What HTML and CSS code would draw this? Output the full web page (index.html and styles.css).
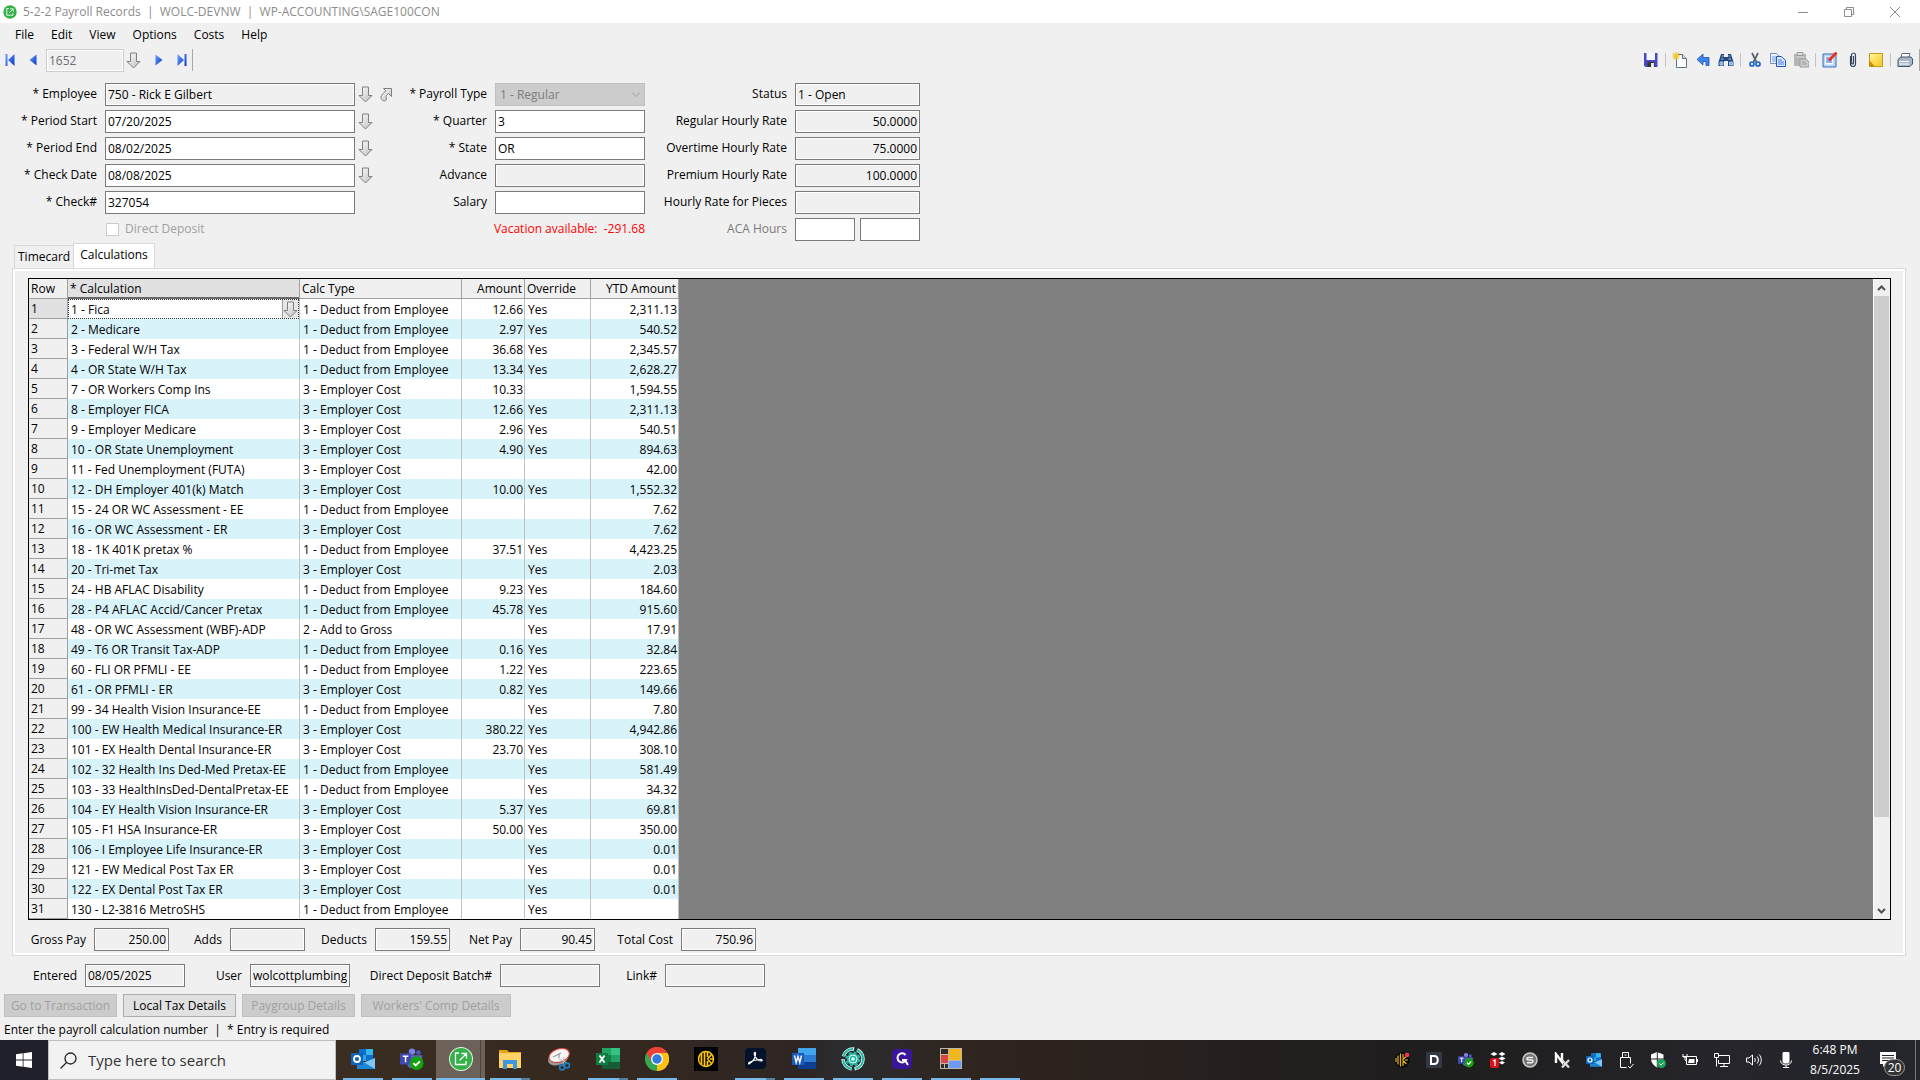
FILE: index.html
```html
<!DOCTYPE html>
<html lang="en">
<head>
<meta charset="utf-8">
<title>5-2-2 Payroll Records</title>
<link rel="stylesheet" href="styles.css">
</head>
<body>
<svg class="defs" aria-hidden="true">
  <defs>
    <linearGradient id="silver" x1="0" y1="0" x2="1" y2="1"><stop offset="0" stop-color="#fff"/><stop offset="1" stop-color="#bdbdbd"/></linearGradient>
    <linearGradient id="blue" x1="0" y1="0" x2="1" y2="1"><stop offset="0" stop-color="#6aa2ff"/><stop offset="1" stop-color="#0a35c0"/></linearGradient>
    <linearGradient id="gold" x1="0" y1="0" x2="1" y2="1"><stop offset="0" stop-color="#fff9a0"/><stop offset="1" stop-color="#f5c518"/></linearGradient>
    <symbol id="down" viewBox="0 0 15 17"><path d="M4.500 1h6v8.500h3.500L7.500 16 1 9.500h3.500z" fill="url(#silver)" stroke="#808080"/></symbol>
    <symbol id="jump" viewBox="0 0 14 15"><path d="M4.500 1.500h8v8l-3-3c-2 1.500-3 3-2.500 4.500l1 1-2.500 2c-2.500-.5-4-2.500-3.500-4 .5-2 2.500-4.500 5-6z" fill="url(#silver)" stroke="#808080"/></symbol>
    <symbol id="prev" viewBox="0 0 8 12"><path d="M7.500 .5v11L.5 6z" fill="url(#blue)"/></symbol>
    <symbol id="next" viewBox="0 0 8 12"><path d="M.5 .5v11l7-5.500z" fill="url(#blue)"/></symbol>
    <symbol id="first" viewBox="0 0 10 12"><path d="M.5 0h2v12h-2zM9.500 0v12L3 6z" fill="url(#blue)"/></symbol>
    <symbol id="last" viewBox="0 0 10 12"><path d="M7.500 0h2v12h-2zM.5 0v12L7 6z" fill="url(#blue)"/></symbol>
    <symbol id="sage" viewBox="0 0 24 24"><circle cx="12" cy="12" r="11.500" fill="#35b048"/><path d="M10 6H6.500v11.500H17V14M10.500 13.500 17 7M12.500 6.500h5v5" fill="none" stroke="#fff" stroke-width="1.500"/></symbol>
    <symbol id="outlook" viewBox="0 0 24 24"><path d="M8 2h14v12H8z" fill="#28a8ea"/><path d="M8 2h7v6H8zM15 8h7v6h-7z" fill="#0a6fc9"/><path d="M15 2h7v6h-7z" fill="#35b8f1"/><path d="M6 11l9 5 9-5v11H6z" fill="#1a86d8"/><path d="M24 11v11L13 15.500z" fill="#7cc7f4"/><path d="M0 6h12v12H0z" fill="#0f64b8"/><circle cx="6" cy="12" r="3" fill="none" stroke="#fff" stroke-width="1.800"/></symbol>
    <symbol id="teams" viewBox="0 0 26 24"><circle cx="13" cy="4" r="3.500" fill="#7b83eb"/><circle cx="20" cy="5" r="2.500" fill="#5059c9"/><path d="M8 8h16v8c0 3-3 4-5 4-2 3-9 3-11-1z" fill="#5b64cf"/><path d="M0 6h12v12H0z" fill="#4048b0"/><path d="M3 9h6M6 9v6.500" stroke="#fff" stroke-width="1.600"/><circle cx="18" cy="16.500" r="7.500" fill="#13a10e"/><path d="M14.500 16.500l2.500 2.500 4.500-4.500" fill="none" stroke="#fff" stroke-width="2"/></symbol>
    <symbol id="keeper" viewBox="0 0 24 24"><circle cx="12" cy="12" r="7.500" fill="none" stroke="#ffc700" stroke-width="1.500"/><path d="M7.500 7v10M10.500 5v14M13.500 5v5M13.500 14v5M13.500 12l4-4.500M13.500 12l4 4.500M16 12h3" stroke="#ffc700" stroke-width="1.700" fill="none"/></symbol>
  </defs>
</svg>

<header class="titlebar">
  <svg class="app-icon" viewBox="0 0 24 24"><use href="#sage"/></svg>
  <h1>5-2-2 Payroll Records&nbsp; |&nbsp; WOLC-DEVNW&nbsp; |&nbsp; WP-ACCOUNTING\SAGE100CON</h1>
  <div class="window-buttons">
    <button aria-label="Minimize"><svg viewBox="0 0 12 12"><path d="M1 6.500h10"/></svg></button>
    <button aria-label="Restore"><svg viewBox="0 0 12 12"><path d="M1.500 3.500h7v7h-7zM3.500 3.500v-2h7v7h-2"/></svg></button>
    <button aria-label="Close"><svg viewBox="0 0 12 12"><path d="M1 1l10 10M11 1L1 11"/></svg></button>
  </div>
</header>

<nav class="menubar">
  <button>File</button><button>Edit</button><button>View</button><button>Options</button><button>Costs</button><button>Help</button>
</nav>

<div class="toolbar">
  <div class="record-nav">
    <button aria-label="First record"><svg width="10" height="12"><use href="#first"/></svg></button>
    <button aria-label="Previous record"><svg width="8" height="12"><use href="#prev"/></svg></button>
    <input class="field disabled" aria-label="Record number" value="1652" disabled>
    <button aria-label="Look up record"><svg width="15" height="17"><use href="#down"/></svg></button>
    <button aria-label="Next record"><svg width="8" height="12"><use href="#next"/></svg></button>
    <button aria-label="Last record"><svg width="10" height="12"><use href="#last"/></svg></button>
    <span class="sep tall"></span>
  </div>
  <div class="tools">
    <button aria-label="Save"><svg viewBox="0 0 16 16"><path d="M1 1h13.500v14H2.500L1 13.500z" fill="#4a4ac0"/><path d="M3.500 1h8.500v7H3.500z" fill="#f4f7ff"/><path d="M4.500 10h7v5h-7z" fill="#333"/><path d="M8 11h3v4H8z" fill="#e8e8e8"/></svg></button>
    <span class="sep"></span>
    <button aria-label="New"><svg viewBox="0 0 16 16"><path d="M4.500 2.500h6l4 4v9h-10z" fill="#fff" stroke="#5b7383"/><path d="M10.500 2.500v4h4" fill="#cfdbe6" stroke="#5b7383"/><path d="M4 0v8M0 4h8M1 1l6 6M7 1L1 7" stroke="#f3c623" stroke-width="1.200"/></svg></button>
    <button aria-label="Undo"><svg viewBox="0 0 16 16"><path d="M2 7.500 8 2v3.500h6v8h-3V9.500H8V13z" fill="#3d86ee" stroke="#1e4fb0" stroke-width=".8"/></svg></button>
    <button aria-label="Find"><svg viewBox="0 0 16 16"><path d="M3 2h3v3h4V2h3l2.500 8v4H10V9H6v5H.5v-4z" fill="#24477e"/><path d="M2 10h3v3H2zM11.500 10h3v3h-3zM3.500 4h2M10.500 4h2M3 7h2.500M10.500 7H13" stroke="#a9c9ee" fill="#7ba8de"/></svg></button>
    <span class="sep"></span>
    <button aria-label="Cut"><svg viewBox="0 0 16 16"><path d="M5 1l4.500 9M11 1l-4.500 9" stroke="#5a6470" stroke-width="1.700"/><circle cx="5" cy="12" r="2" fill="none" stroke="#1d62d1" stroke-width="1.700"/><circle cx="11" cy="12" r="2" fill="none" stroke="#1d62d1" stroke-width="1.700"/></svg></button>
    <button aria-label="Copy"><svg viewBox="0 0 16 16"><path d="M.5 1.500h6l3 3v7h-9z" fill="#eaf2ff" stroke="#6f8fc4"/><path d="M2 5h4M2 7h5M2 9h5" stroke="#6f9ae0"/><path d="M6.500 4.500h5l4 4v6h-9z" fill="#dce9ff" stroke="#2451b8"/><path d="M8 8h4M8 10h6M8 12h6" stroke="#4a7ad8"/></svg></button>
    <button aria-label="Paste" disabled><svg viewBox="0 0 16 16"><path d="M1 2h12v12H1z" fill="#b5b5b5"/><path d="M4 .5h6v3H4z" fill="#ddd" stroke="#999"/><path d="M3 5h8" stroke="#ddd"/><path d="M7 7h6l3 3v5H7z" fill="#cfcfcf" stroke="#9a9a9a"/><path d="M9 10h4M9 12h5" stroke="#9a9a9a"/></svg></button>
    <span class="sep"></span>
    <button aria-label="Notes"><svg viewBox="0 0 16 16"><path d="M1 2h13v13H1z" fill="#b9d4fb" stroke="#3c6cb8"/><path d="M3 4.500h8v8H3z" fill="#fff"/><path d="M4 6h4M4 8h6M4 10h6" stroke="#2a62d8"/><path d="M7 8.500 14.500 .500" stroke="#e8331a" stroke-width="2.800"/></svg></button>
    <button aria-label="Attachments"><svg viewBox="0 0 16 16"><path d="M5.500 4v8a2.500 2.500 0 0 0 5 0V3a2 2 0 0 0-4 0v8a1 1 0 0 0 2 0V4" fill="none" stroke="#33475b" stroke-width="1.200"/></svg></button>
    <button aria-label="Sticky note"><svg viewBox="0 0 16 16"><path d="M1.500 1.500h13v13h-13z" fill="url(#gold)" stroke="#c39a1c"/><path d="M1 8l6 6.500H1z" fill="#c88a00"/><path d="M2 8.500h4.500L7 14z" fill="#ffd94a"/></svg></button>
    <span class="sep"></span>
    <button aria-label="Print"><svg viewBox="0 0 16 16"><path d="M5 1.500h8L11 7H3.500z" fill="#fff" stroke="#5a6d80"/><path d="M1 7.500 4 5h10l1.500 2v5L13 14.500H1z" fill="#a9b8c8" stroke="#43566b"/><path d="M2 9.500h10M2 12h10" stroke="#fff"/></svg></button>
    <span class="sep tall"></span>
  </div>
</div>

<main>
  <form class="record-form">
    <div class="form-col col-a">
      <label for="employee">* Employee</label>
      <input class="field" id="employee" value="750 - Rick E Gilbert" readonly>
      <span class="lookups"><button type="button" aria-label="Look up employee"><svg width="15" height="17"><use href="#down"/></svg></button><button type="button" aria-label="Open employee"><svg width="14" height="15"><use href="#jump"/></svg></button></span>
      <label for="pstart">* Period Start</label>
      <input class="field" id="pstart" value="07/20/2025">
      <span class="lookups"><button type="button" aria-label="Pick period start"><svg width="15" height="17"><use href="#down"/></svg></button></span>
      <label for="pend">* Period End</label>
      <input class="field" id="pend" value="08/02/2025">
      <span class="lookups"><button type="button" aria-label="Pick period end"><svg width="15" height="17"><use href="#down"/></svg></button></span>
      <label for="cdate">* Check Date</label>
      <input class="field" id="cdate" value="08/08/2025">
      <span class="lookups"><button type="button" aria-label="Pick check date"><svg width="15" height="17"><use href="#down"/></svg></button></span>
      <label for="check">* Check#</label>
      <input class="field" id="check" value="327054">
      <span class="check-row"><input type="checkbox" id="dd" disabled><label for="dd">Direct Deposit</label></span>
    </div>
    <div class="form-col col-b">
      <label for="ptype">* Payroll Type</label>
      <span class="select-wrap"><select id="ptype" disabled><option>1 - Regular</option></select><svg viewBox="0 0 10 6"><path d="M1 .5l4 4 4-4" fill="none" stroke="#9a9a9a"/></svg></span>
      <label for="quarter">* Quarter</label>
      <input class="field" id="quarter" value="3">
      <label for="state">* State</label>
      <input class="field" id="state" value="OR">
      <label for="advance">Advance</label>
      <input class="field" id="advance" readonly>
      <label for="salary">Salary</label>
      <input class="field" id="salary">
      <p class="vacation">Vacation available:&nbsp; -291.68</p>
    </div>
    <div class="form-col col-c">
      <label for="status">Status</label>
      <input class="field" id="status" value="1 - Open" readonly>
      <label for="reg">Regular Hourly Rate</label>
      <input class="field num" id="reg" value="50.0000" readonly>
      <label for="ot">Overtime Hourly Rate</label>
      <input class="field num" id="ot" value="75.0000" readonly>
      <label for="prem">Premium Hourly Rate</label>
      <input class="field num" id="prem" value="100.0000" readonly>
      <label for="pieces">Hourly Rate for Pieces</label>
      <input class="field num" id="pieces" readonly>
      <label for="aca" class="dim">ACA Hours</label>
      <span class="pair"><input class="field" id="aca"><input class="field" aria-label="ACA hours, second value"></span>
    </div>
  </form>

  <div class="tabs" role="tablist">
    <button role="tab" aria-selected="false">Timecard</button>
    <button role="tab" aria-selected="true">Calculations</button>
  </div>

  <section class="panel">
    <div class="grid-box">
      <div class="grid-area">
        <table>
          <colgroup><col class="c-row"><col class="c-calc"><col class="c-type"><col class="c-amt"><col class="c-ovr"><col class="c-ytd"></colgroup>
          <thead><tr><th>Row</th><th class="current">* Calculation</th><th>Calc Type</th><th class="num">Amount</th><th>Override</th><th class="num">YTD Amount</th></tr></thead>
          <tbody>
            <tr class="active"><th>1</th><td><div class="cell-edit"><span>1 - Fica</span><button aria-label="Look up calculation"><svg width="15" height="17"><use href="#down"/></svg></button></div></td><td>1 - Deduct from Employee</td><td>12.66</td><td>Yes</td><td>2,311.13</td></tr>
            <tr><th>2</th><td>2 - Medicare</td><td>1 - Deduct from Employee</td><td>2.97</td><td>Yes</td><td>540.52</td></tr>
            <tr><th>3</th><td>3 - Federal W/H Tax</td><td>1 - Deduct from Employee</td><td>36.68</td><td>Yes</td><td>2,345.57</td></tr>
            <tr><th>4</th><td>4 - OR State W/H Tax</td><td>1 - Deduct from Employee</td><td>13.34</td><td>Yes</td><td>2,628.27</td></tr>
            <tr><th>5</th><td>7 - OR Workers Comp Ins</td><td>3 - Employer Cost</td><td>10.33</td><td></td><td>1,594.55</td></tr>
            <tr><th>6</th><td>8 - Employer FICA</td><td>3 - Employer Cost</td><td>12.66</td><td>Yes</td><td>2,311.13</td></tr>
            <tr><th>7</th><td>9 - Employer Medicare</td><td>3 - Employer Cost</td><td>2.96</td><td>Yes</td><td>540.51</td></tr>
            <tr><th>8</th><td>10 - OR State Unemployment</td><td>3 - Employer Cost</td><td>4.90</td><td>Yes</td><td>894.63</td></tr>
            <tr><th>9</th><td>11 - Fed Unemployment (FUTA)</td><td>3 - Employer Cost</td><td></td><td></td><td>42.00</td></tr>
            <tr><th>10</th><td>12 - DH Employer 401(k) Match</td><td>3 - Employer Cost</td><td>10.00</td><td>Yes</td><td>1,552.32</td></tr>
            <tr><th>11</th><td>15 - 24 OR WC Assessment - EE</td><td>1 - Deduct from Employee</td><td></td><td></td><td>7.62</td></tr>
            <tr><th>12</th><td>16 - OR WC Assessment - ER</td><td>3 - Employer Cost</td><td></td><td></td><td>7.62</td></tr>
            <tr><th>13</th><td>18 - 1K 401K pretax %</td><td>1 - Deduct from Employee</td><td>37.51</td><td>Yes</td><td>4,423.25</td></tr>
            <tr><th>14</th><td>20 - Tri-met Tax</td><td>3 - Employer Cost</td><td></td><td>Yes</td><td>2.03</td></tr>
            <tr><th>15</th><td>24 - HB AFLAC Disability</td><td>1 - Deduct from Employee</td><td>9.23</td><td>Yes</td><td>184.60</td></tr>
            <tr><th>16</th><td>28 - P4 AFLAC Accid/Cancer Pretax</td><td>1 - Deduct from Employee</td><td>45.78</td><td>Yes</td><td>915.60</td></tr>
            <tr><th>17</th><td>48 - OR WC Assessment (WBF)-ADP</td><td>2 - Add to Gross</td><td></td><td>Yes</td><td>17.91</td></tr>
            <tr><th>18</th><td>49 - T6 OR Transit Tax-ADP</td><td>1 - Deduct from Employee</td><td>0.16</td><td>Yes</td><td>32.84</td></tr>
            <tr><th>19</th><td>60 - FLI OR PFMLI - EE</td><td>1 - Deduct from Employee</td><td>1.22</td><td>Yes</td><td>223.65</td></tr>
            <tr><th>20</th><td>61 - OR PFMLI - ER</td><td>3 - Employer Cost</td><td>0.82</td><td>Yes</td><td>149.66</td></tr>
            <tr><th>21</th><td>99 - 34 Health Vision Insurance-EE</td><td>1 - Deduct from Employee</td><td></td><td>Yes</td><td>7.80</td></tr>
            <tr><th>22</th><td>100 - EW Health Medical Insurance-ER</td><td>3 - Employer Cost</td><td>380.22</td><td>Yes</td><td>4,942.86</td></tr>
            <tr><th>23</th><td>101 - EX Health Dental Insurance-ER</td><td>3 - Employer Cost</td><td>23.70</td><td>Yes</td><td>308.10</td></tr>
            <tr><th>24</th><td>102 - 32 Health Ins Ded-Med Pretax-EE</td><td>1 - Deduct from Employee</td><td></td><td>Yes</td><td>581.49</td></tr>
            <tr><th>25</th><td>103 - 33 HealthInsDed-DentalPretax-EE</td><td>1 - Deduct from Employee</td><td></td><td>Yes</td><td>34.32</td></tr>
            <tr><th>26</th><td>104 - EY Health Vision Insurance-ER</td><td>3 - Employer Cost</td><td>5.37</td><td>Yes</td><td>69.81</td></tr>
            <tr><th>27</th><td>105 - F1 HSA Insurance-ER</td><td>3 - Employer Cost</td><td>50.00</td><td>Yes</td><td>350.00</td></tr>
            <tr><th>28</th><td>106 - I Employee Life Insurance-ER</td><td>3 - Employer Cost</td><td></td><td>Yes</td><td>0.01</td></tr>
            <tr><th>29</th><td>121 - EW Medical Post Tax ER</td><td>3 - Employer Cost</td><td></td><td>Yes</td><td>0.01</td></tr>
            <tr><th>30</th><td>122 - EX Dental Post Tax ER</td><td>3 - Employer Cost</td><td></td><td>Yes</td><td>0.01</td></tr>
            <tr><th>31</th><td>130 - L2-3816 MetroSHS</td><td>1 - Deduct from Employee</td><td></td><td>Yes</td><td></td></tr>
          </tbody>
        </table>
      </div>
      <div class="scrollbar">
        <button aria-label="Scroll up"><svg viewBox="0 0 9 6"><path d="M1 5l3.500-3.500L8 5"/></svg></button>
        <div class="track"><div class="thumb"></div></div>
        <button aria-label="Scroll down"><svg viewBox="0 0 9 6"><path d="M1 1l3.500 3.500L8 1"/></svg></button>
      </div>
    </div>
    <div class="totals">
      <label for="gross">Gross Pay</label><input class="field num" id="gross" value="250.00" readonly>
      <label for="adds">Adds</label><input class="field num" id="adds" readonly>
      <label for="deducts">Deducts</label><input class="field num" id="deducts" value="159.55" readonly>
      <label for="net">Net Pay</label><input class="field num" id="net" value="90.45" readonly>
      <label for="cost">Total Cost</label><input class="field num" id="cost" value="750.96" readonly>
    </div>
  </section>

  <div class="audit">
    <label for="entered">Entered</label><input class="field" id="entered" value="08/05/2025" readonly>
    <label for="user">User</label><input class="field" id="user" value="wolcottplumbing\" readonly>
    <label for="batch">Direct Deposit Batch#</label><input class="field" id="batch" readonly>
    <label for="link">Link#</label><input class="field" id="link" readonly>
  </div>
  <div class="actions">
    <button disabled>Go to Transaction</button>
    <button>Local Tax Details</button>
    <button disabled>Paygroup Details</button>
    <button class="wide" disabled>Workers' Comp Details</button>
  </div>
</main>
<p class="statusline">Enter the payroll calculation number&nbsp; |&nbsp; * Entry is required</p>

<footer class="taskbar">
  <button class="start" aria-label="Start"><svg viewBox="0 0 16 16"><path d="M0 2.200 6.700 1.300v6.300H0zM7.500 1.200 16 0v7.600H7.500zM0 8.400h6.700v6.300L0 13.800zM7.500 8.400H16V16l-8.500-1.200z" fill="#fff"/></svg></button>
  <label class="search"><svg viewBox="0 0 17 17"><circle cx="10.500" cy="6.500" r="5.500"/><path d="M6.500 10.500.5 16.500"/></svg><input type="text" aria-label="Search" placeholder="Type here to search"></label>
  <nav class="apps">
    <button class="open" aria-label="Outlook"><svg><use href="#outlook"/></svg></button>
    <button class="open" aria-label="Teams"><svg><use href="#teams"/></svg></button>
    <button class="focus" aria-label="Sage 100 Contractor"><svg viewBox="0 0 24 24"><circle cx="12" cy="12" r="12" fill="#dff3e0"/><circle cx="12" cy="12" r="11" fill="#35b048"/><path d="M10 6H6.500v11.500H17V14M10.500 13.500 17 7M12.500 6.500h5v5" fill="none" stroke="#fff" stroke-width="1.300"/></svg></button>
    <button class="open multi" aria-label="File Explorer"><svg viewBox="0 0 24 24"><path d="M1 3h8l2 2h12v4H1z" fill="#e8a317"/><path d="M1 6h22v15H1z" fill="#ffd368"/><path d="M5 13h14v9h-4v-5H9v5H5z" fill="#3e97dc"/></svg></button>
    <button aria-label="Snipping Tool"><svg viewBox="0 0 24 24"><ellipse cx="11" cy="11.500" rx="10.500" ry="6.500" fill="#999" transform="rotate(-20 11 11)"/><ellipse cx="12" cy="8.500" rx="10.500" ry="6.500" fill="#f4f4f4" stroke="#d8453f" transform="rotate(-18 12 8)"/><path d="M6 10l8-4M12 7v4" stroke="#888"/><path d="M12 12l8 4M17 10l-1 8" stroke="#bbb"/><circle cx="15" cy="20.500" r="2.400" fill="none" stroke="#1c7fc4" stroke-width="1.600"/><circle cx="20" cy="18.500" r="2.400" fill="none" stroke="#1c7fc4" stroke-width="1.600"/></svg></button>
    <button class="open multi" aria-label="Excel"><svg viewBox="0 0 24 24"><path d="M6 1h9v7H6z" fill="#21a366"/><path d="M15 1h9v7h-9z" fill="#33c481"/><path d="M6 8h9v7H6z" fill="#107c41"/><path d="M15 8h9v7h-9z" fill="#21a366"/><path d="M6 15h18v7H6z" fill="#185c37"/><path d="M0 6h12v12H0z" fill="#107c41"/><path d="M3.500 8.500l5 7M8.500 8.500l-5 7" stroke="#fff" stroke-width="1.800"/></svg></button>
    <button class="open" aria-label="Chrome"><svg viewBox="0 0 24 24"><path d="M12 12 1.600 6A12 12 0 0 1 22.400 6z" fill="#ea4335"/><path d="M12 12 22.400 6A12 12 0 0 1 12 24z" fill="#fbc116"/><path d="M12 12v12A12 12 0 0 1 1.600 6z" fill="#34a853"/><path d="M12 6h10.400A12 12 0 0 0 1.600 6l5.200 9z" fill="#ea4335"/><path d="M17.200 15 12 24A12 12 0 0 0 22.400 6H12z" fill="#fbc116"/><circle cx="12" cy="12" r="6" fill="#fff"/><circle cx="12" cy="12" r="4.700" fill="#2f7de1"/></svg></button>
    <button aria-label="Keeper"><svg viewBox="0 0 24 24"><path d="M0 0h24v24H0z"/><use href="#keeper"/></svg></button>
    <button class="open multi" aria-label="Acrobat"><svg viewBox="0 0 24 24"><rect x="2" y="1" width="21" height="21" rx="4" fill="#04122b"/><path d="M6 17c4-2 7-7 6.500-11-.8-1.500-1.700 0-1 2 1.500 4 4 6 7 6 1.500-.5.500-1.800-2-1.500-4 .3-8 1.500-10.300 3-.8.800-.8 1.300-.2 1.500z" fill="none" stroke="#fff" stroke-width="1.200"/></svg></button>
    <button class="open" aria-label="Word"><svg viewBox="0 0 24 24"><path d="M6 1h18v7H6z" fill="#41a5ee"/><path d="M6 8h18v7H6z" fill="#2b7cd3"/><path d="M6 15h18v7H6z" fill="#103f91"/><path d="M0 6h12v12H0z" fill="#185abd"/><path d="M2.500 8.500l1.700 7L6 9.500l1.800 6 1.700-7" fill="none" stroke="#fff" stroke-width="1.400"/></svg></button>
    <button class="open" aria-label="Settings tool"><svg viewBox="0 0 24 24"><circle cx="12" cy="12" r="10" fill="none" stroke="#d9fff8" stroke-width="3.500" stroke-dasharray="14 3"/><circle cx="12" cy="12" r="10" fill="none" stroke="#2ab5a2" stroke-width="2" stroke-dasharray="13 4"/><circle cx="12" cy="12" r="6" fill="#2ab5a2" stroke="#2ab5a2" stroke-width="3" stroke-dasharray="2.700 2"/><circle cx="12" cy="12" r="4" fill="none" stroke="#d9fff8"/><circle cx="12" cy="12" r="1.800" fill="#d9fff8"/></svg></button>
    <button class="open" aria-label="Greenshot"><svg viewBox="0 0 24 24"><rect x="2" y="2" width="20" height="20" rx="4" fill="#3a159a"/><path d="M15.500 8a4.500 4.500 0 1 0 .5 5h-4M15 13l3 5" fill="none" stroke="#fff" stroke-width="2"/></svg></button>
    <button class="open" aria-label="Remote tool"><svg viewBox="0 0 24 24"><path d="M1 1h22v21H1z" fill="#bdb7ae"/><path d="M2 2h7v5H2z" fill="#322a26"/><path d="M10 2h12v11H10z" fill="#f0b81c"/><path d="M2 8h7v8H2z" fill="#d9483f"/><path d="M2 17h3v4H2zM6 17h3v4H6z" fill="#322a26"/><path d="M10 14h12v7H10z" fill="#6b9bf2"/></svg></button>
    <button class="open" aria-label="Background task"></button>
  </nav>
  <div class="tray">
    <button aria-label="Keeper"><svg viewBox="0 0 16 16"><circle cx="8" cy="8" r="7.800" fill="#0b0b0b"/><path d="M2 6v4M4 3.500v9M6.500 1.500v13M9 2v4.500M9 9.500V14M8.500 8l4-4M8.500 8l4 4M11 8h3" stroke="#e3b11a" stroke-width="1.200"/><circle cx="13" cy="3" r="2.300" fill="#f0384a"/></svg></button>
    <button aria-label="D"><svg viewBox="0 0 16 16"><path d="M0 0h16v16H0z" fill="#343846"/><path d="M5 4h3c5 0 5 8 0 8H5z" fill="none" stroke="#fff" stroke-width="2"/></svg></button>
    <button aria-label="Teams"><svg><use href="#teams"/></svg></button>
    <button aria-label="Dropbox"><svg viewBox="0 0 16 16"><path d="M4 0l3.500 2L4 4 .5 2zM12 0l3.500 2L12 4 8.500 2zM12 4.500l3.500 2-3.500 2-3.500-2zM12 9l3 1.500-3 2-3-2z" fill="#fff"/><rect x="0" y="6" width="9" height="10" rx="2" fill="#d8101c"/><path d="M3 9l2-1v6" fill="none" stroke="#fff" stroke-width="1.300"/></svg></button>
    <button aria-label="Sync"><svg viewBox="0 0 16 16"><circle cx="8" cy="8" r="7" fill="#777" stroke="#ccc" stroke-width="1.500"/><path d="M11 5.500H6.500c-2 0-2 2.500 0 2.500h3c2 0 2 2.700 0 2.700H5" fill="none" stroke="#eee" stroke-width="1.600"/></svg></button>
    <button aria-label="Nx"><svg viewBox="0 0 16 16"><path d="M2 11V2l6 8V1" fill="none" stroke="#fff" stroke-width="2.400"/><path d="M8 8l7 7.500M15 8l-7 7.500" stroke="#ddd" stroke-width="2.300"/></svg></button>
    <button aria-label="Outlook"><svg><use href="#outlook"/></svg></button>
    <button aria-label="USB device"><svg class="line" viewBox="0 0 16 16"><path d="M4.500 5.500V.5h6v5M2.500 15.500v-10h10v6M2.500 15.500h6M6.500 3h2M10 14l2 2 3.500-4"/></svg></button>
    <button aria-label="Windows Security"><svg viewBox="0 0 16 16"><path d="M7 0 1 2.500v4c0 4 2.500 7 6 9 3.500-2 6.500-5 6.500-9v-4z" fill="#fff"/><path d="M7.300 0v15M1 7h13" stroke="#222" stroke-width="1"/><circle cx="11.500" cy="11.500" r="4.500" fill="#1ba35a"/><path d="M9.500 11.500l1.500 1.500 2.500-2.500" fill="none" stroke="#fff"/></svg></button>
    <button aria-label="Battery"><svg class="line" viewBox="0 0 16 16"><path d="M4.500 12.500v-8h10v8zM15.500 7v3M1 2v3h4V2M3 5v3l2 1M.5 4.500h5" /><path d="M7 7h5.500v4H6z" fill="#fff" stroke="none"/></svg></button>
    <button aria-label="Network"><svg class="line" viewBox="0 0 16 16"><path d="M5 3.500h10.500v8H4.500V8M.5 1.500h4v4h-4zM2.500 5.500v9M6 14.500h8M10 12v2"/></svg></button>
    <button aria-label="Volume"><svg class="line" viewBox="0 0 16 16"><path d="M.5 6v4h2.500l3.500 3V3L3 6zM8.500 6c1 1 1 3 0 4M11 4.500c2 2 2 5 0 7M13 2.500c3 3 3 8 0 11"/></svg></button>
    <button aria-label="Microphone"><svg class="line" viewBox="0 0 16 16"><rect x="5" y="0" width="6" height="11" rx="1" fill="#fff"/><path d="M2.500 8.500c0 6 11 6 11 0M8 13v2.500M5 15.500h6"/></svg></button>
    <time class="clock"><span>6:48 PM</span><span>8/5/2025</span></time>
    <button class="notify" aria-label="20 notifications"><svg viewBox="0 0 16 16"><path d="M0 0h16v12H6l-3 3v-3H0z" fill="#fff"/><path d="M2 3.500h12M2 6h12M2 8.500h8" stroke="#222"/></svg><span class="badge">20</span></button>
  </div>
</footer>
</body>
</html>
```
FILE: styles.css
```css
* { box-sizing: border-box; }

body {
  margin: 0;
  min-height: 100vh;
  display: flex;
  flex-direction: column;
  background: #f0f0f0;
  color: #000;
  font: 12px/20px "Open Sans", "Noto Sans", sans-serif;
}

button, input, select { font: inherit; color: inherit; }
button { border: 0; padding: 0; background: none; }
button svg { display: block; }
p { margin: 0; }
.defs { position: absolute; width: 0; height: 0; }

/* Title bar and menus */
.titlebar { display: flex; align-items: center; height: 23px; padding-left: 3px; background: #fff; color: #8c8c8c; }
.app-icon { width: 14px; height: 14px; margin-right: 6px; }
.titlebar h1 { margin: 0; font-size: 12px; font-weight: 400; }
.window-buttons { display: flex; margin: 0 2px 0 auto; }
.window-buttons button { display: grid; place-items: center; width: 46px; height: 22px; }
.window-buttons svg { width: 12px; height: 12px; fill: none; stroke: #8c8c8c; }
.menubar { display: flex; gap: 17px; height: 24px; padding-left: 15px; align-items: center; }

/* Toolbar */
.toolbar { display: flex; justify-content: space-between; height: 26px; }
.record-nav, .tools { display: flex; align-items: center; }
.record-nav { gap: 14px; padding-left: 5px; }
.record-nav .field { width: 78px; margin: 0 -12px 0 -5px; }
.tools { gap: 7px; }
.tools svg { width: 16px; height: 16px; }
.sep { width: 1px; height: 14px; background: #c4c4c4; }
.sep.tall { height: 22px; background: #a8a8a8; }
.tools .sep { margin: 0 -1px; }
.tools .sep.tall { margin-right: 0; }
.record-nav .sep { margin-left: -9px; }

/* Fields */
.field {
  width: 100%;
  min-width: 0;
  height: 23px;
  padding: 0 2px;
  border: 1px solid #7a7a7a;
  border-radius: 0;
  background: #fff;
  outline: 0;
}
.field:read-only { background: #f0f0f0; box-shadow: inset 0 0 0 1px #fff; }
.field.disabled { border-color: #ccc; color: #6d6d6d; }
.num { text-align: right; }

/* Record form */
.record-form { display: flex; padding-top: 10px; }
.form-col { display: grid; grid-auto-rows: 23px; row-gap: 4px; column-gap: 8px; align-items: center; align-content: start; }
.form-col > label { text-align: right; white-space: nowrap; }
.form-col .field, .form-col label, .form-col p { padding-bottom: 1px; }
.col-a { grid-template-columns: 97px 250px 34px; }
.col-b { grid-template-columns: 90px 150px; }
.col-c { grid-template-columns: 142px 125px; }
.col-a > label { grid-column: 1; }
.lookups { display: flex; align-items: center; gap: 6px; margin-left: -5px; }
.check-row { grid-column: 2; display: flex; align-items: center; gap: 6px; color: #a0a0a0; }
.check-row input { appearance: none; width: 13px; height: 13px; margin: 0 0 0 1px; border: 1px solid #ccc; background: #fff; }
.select-wrap { display: grid; align-items: center; }
.select-wrap > * { grid-area: 1 / 1; }
.select-wrap select { appearance: none; height: 23px; padding: 0 4px; border: 1px solid #bfbfbf; border-radius: 0; background: #ccc; color: #7d7d7d; opacity: 1; }
.select-wrap svg { justify-self: end; width: 10px; height: 6px; margin-right: 4px; }
.vacation { grid-column: 1 / -1; color: #f00; text-align: right; white-space: nowrap; }
.dim { color: #7a7a7a; }
.pair { display: flex; gap: 5px; }

/* Tabs */
.tabs { display: flex; align-items: flex-end; padding: 2px 0 0 14px; }
.tabs button { height: 23px; padding: 0 3px; border: 1px solid #d9d9d9; border-width: 1px 0 0 1px; }
.tabs button[aria-selected="true"] { height: 25px; padding: 0 6px 2px; border-width: 1px 1px 0; background: #fff; }

/* Calculations panel */
.panel { margin: 0 14px 0 12px; padding: 9px 14px 4px 15px; border: 1px solid #d9d9d9; box-shadow: inset 0 0 0 2px #fff; }
.grid-box { display: flex; border: 1px solid #000; background: #808080; }
.grid-area { flex: 1; min-width: 0; }
table { border-collapse: separate; border-spacing: 0; table-layout: fixed; width: 650px; }
.c-row { width: 39px; }
.c-calc { width: 232px; }
.c-type { width: 162px; }
.c-amt { width: 63px; }
.c-ovr { width: 66px; }
.c-ytd { width: 88px; }
th, td { height: 20px; padding: 1px 2px 0; line-height: 18px; font-weight: 400; text-align: left; white-space: nowrap; overflow: hidden; border-right: 1px solid #c0c0c0; }
th { background: #f0f0f0; border-right-color: #a0a0a0; border-bottom: 1px solid #a0a0a0; }
th.num { text-align: right; }
th.current { background: #e1e1e1; border-bottom-color: #696969; box-shadow: inset 0 -1px #696969; }
td { padding: 2px 1px 0 3px; background: #fff; }
tbody tr:nth-child(even) td { background: #d9f3fa; }
td:nth-child(4), td:nth-child(6) { text-align: right; }
.active th { background: #e1e1e1; }
.active td:nth-child(2) { padding: 0; }
.cell-edit { display: flex; justify-content: space-between; height: 20px; padding-left: 2px; line-height: 20px; border: 1px dotted #333; }
.cell-edit button { width: 16px; height: 18px; border-left: 1px solid #a0a0a0; background: #e6e6e6; }

.scrollbar { display: flex; flex-direction: column; width: 17px; padding-right: 1px; border-left: 1px solid #fff; background: #f0f0f0; }
.scrollbar button { display: grid; place-items: center; height: 17px; }
.scrollbar svg { width: 9px; height: 6px; fill: none; stroke: #505050; stroke-width: 2; }
.track { flex: 1; }
.thumb { height: 86%; background: #cdcdcd; }

/* Totals, audit and action rows */
.totals, .audit { display: grid; align-items: center; column-gap: 8px; }
.totals label, .audit label { text-align: right; white-space: nowrap; }
.totals { grid-template-columns: 58px 75px 45px 75px 54px 75px 54px 75px 70px 75px; margin-top: 8px; }
.audit { grid-template-columns: 77px 100px 49px 100px 134px 100px 49px 100px; padding-top: 8px; }
.actions { display: flex; gap: 6px; padding: 7px 4px 0; }
.actions button { width: 113px; height: 23px; border: 1px solid #adadad; background: #e1e1e1; }
.actions .wide { width: 150px; }
.actions button:disabled { border-color: #bfbfbf; background: #ccc; color: #a0a0a0; }
.statusline { padding: 3px 4px 0; }

/* Taskbar */
.taskbar {
  display: flex;
  height: 40px;
  margin-top: auto;
  color: #fff;
  background: linear-gradient(90deg, #20202a 0, #20202a 3%, #3a2d22 18%, #35291f 30%, #2f2624 42%, #2b2d31 44%, #30251f 50%, #241f1e 65%, #1e1e1e 75%, #25252b 90%, #24262c 100%);
}
.start { display: grid; place-items: center; width: 48px; }
.start svg { width: 16px; height: 16px; }
.search { display: flex; align-items: center; gap: 11px; width: 288px; padding: 0 11px; border: 1px solid #c0c0c0; background: #f2f2f2; color: #333; }
.search svg { width: 17px; height: 17px; fill: none; stroke: #222; stroke-width: 1.3; }
.search input { flex: 1; min-width: 0; border: 0; padding: 0; background: none; font-size: 15px; outline: 0; }
.search input::placeholder { color: #333; opacity: 1; }
.apps { display: flex; padding-left: 2px; }
.apps button { display: grid; grid-template-rows: 38px 2px; place-items: center; align-content: end; width: 49px; }
.apps svg { width: 24px; height: 24px; grid-row: 1; }
.apps .open::after, .apps .focus::after { content: ""; grid-row: 2; width: 40px; height: 2px; background: #76b9ed; }
.apps .focus { background: linear-gradient(90deg, #6d625a 44px, #4c433d 44px, #4c433d 45px, #6d625a 45px); }
.apps .focus::after { width: 100%; }
.apps .multi::after { background: linear-gradient(90deg, #76b9ed 31px, #557f9f 31px); }
.tray { display: flex; align-items: center; gap: 16px; margin-left: auto; padding-right: 4px; }
.tray svg { width: 16px; height: 16px; }
.tray .line { fill: none; stroke: #fff; }
.clock { display: flex; flex-direction: column; align-items: center; width: 50px; margin-right: 4px; }
.notify { position: relative; width: 36px; height: 40px; border-right: 1px solid #777; }
.badge { position: absolute; left: 4px; top: 19px; width: 21px; height: 17px; border: 1px solid #999; border-radius: 9px; background: #333; line-height: 15px; }
```
